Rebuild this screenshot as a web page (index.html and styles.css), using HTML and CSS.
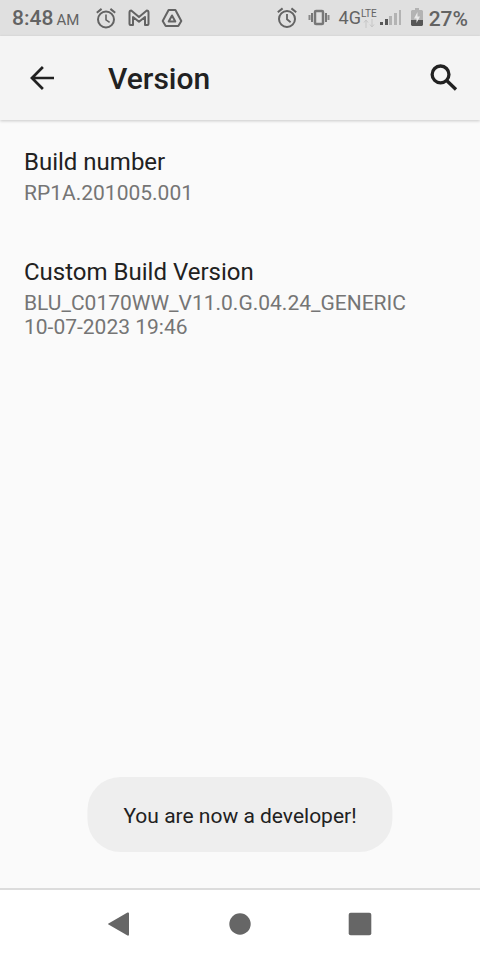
FILE: index.html
```html
<!DOCTYPE html>
<html lang="en">
<head>
<meta charset="utf-8">
<meta name="viewport" content="width=device-width, initial-scale=1">
<title>Version</title>
<link rel="stylesheet" href="styles.css">
</head>
<body>
<div class="status-bar">
  <div class="status-left">
    <div class="clock">8:48 <span class="meridiem">AM</span></div>
    <svg width="24" height="24" viewBox="0 0 24 24" aria-hidden="true">
      <g fill="none" stroke="currentColor" stroke-width="2">
        <circle cx="12" cy="13.5" r="8"/>
        <path d="M2.8 6.8 7.6 2.9M21.2 6.8 16.4 2.9"/>
        <path d="M12 8.5v5.3l3.6 2.6" stroke-width="1.6"/>
      </g>
    </svg>
    <svg width="24" height="24" viewBox="0 0 24 24" aria-hidden="true">
      <path d="M2.500 18V6.500Q2.500 4.500 4.200 4.500L12 11 19.800 4.500Q21.500 4.500 21.500 6.500V18q0 1-1 1H18V11L12 15.700 6 11v8H3.500q-1 0-1-1Z" fill="none" stroke="currentColor" stroke-width="2" stroke-linejoin="round"/>
    </svg>
    <svg width="24" height="24" viewBox="0 0 24 24" aria-hidden="true">
      <g fill="none" stroke="currentColor" stroke-width="2" stroke-linejoin="round">
        <path d="M8.600 4h6.800L21.300 15 18.300 20h-12.600L2.700 15Z"/>
        <path d="m12 9.500 3.300 6H8.700Z"/>
      </g>
    </svg>
  </div>
  <div class="status-right">
    <svg width="24" height="24" viewBox="0 0 24 24" aria-hidden="true">
      <g fill="none" stroke="currentColor" stroke-width="2">
        <circle cx="12" cy="13" r="8"/>
        <path d="M2.800 6.300 7.600 2.400M21.200 6.300 16.400 2.400"/>
        <path d="M12 8v5.300l3.600 3" stroke-width="1.800"/>
      </g>
    </svg>
    <svg width="22" height="24" viewBox="0 0 22 24" aria-hidden="true">
      <rect x="7" y="5" width="8" height="13" rx="1" fill="none" stroke="#777" stroke-width="2.500"/>
      <path d="M4 7v9M18 7v9" stroke="#777" stroke-width="2"/>
      <path d="M1.500 9v5M20.500 9v5" stroke="#888" stroke-width="2"/>
    </svg>
    <div class="network">
      <span>4G</span>
      <span class="network-detail">
        <span class="lte">LTE</span>
        <svg width="12" height="9" viewBox="0 0 12 9" aria-hidden="true">
          <path d="M3 9V1M1 3.500 3 1l2 2.500M9 0v8M7 5.500 9 8l2-2.500" fill="none" stroke="#c6c6c6"/>
        </svg>
      </span>
    </div>
    <svg class="signal" width="22" height="24" viewBox="0 0 22 24" aria-hidden="true">
      <path d="M0 16h3v3H0zM5 13h3v6H5z" fill="#565656"/>
      <path d="M9 10h3v9H9zM14 7h3v12h-3zM19 4h2v15h-2z" fill="#b3b3b3"/>
    </svg>
    <svg width="12" height="24" viewBox="0 0 12 24" aria-hidden="true">
      <path d="M4 2h4v2h3l1 1v9H0V5l1-1h3z" fill="#b3b3b3"/>
      <path d="M0 14h12v5l-1 1H1l-1-1z" fill="#565656"/>
      <path d="M6.500 6 3 12.500h2.500V17L9 10.500H6.500Z" fill="#e8e8e8"/>
    </svg>
    <div class="percent">27%</div>
  </div>
</div>
<header class="app-bar">
  <button class="icon-button" type="button" aria-label="Back">
    <svg width="36" height="36" viewBox="0 0 24 24" aria-hidden="true">
      <path d="M20 12H5M12.600 4.700 5.300 12l7.300 7.300" fill="none" stroke="currentColor" stroke-width="1.800"/>
    </svg>
  </button>
  <h1 class="title">Version</h1>
  <button class="icon-button" type="button" aria-label="Search">
    <svg width="36" height="36" viewBox="0 0 24 24" aria-hidden="true">
      <g fill="none" stroke="currentColor">
        <circle cx="9.700" cy="9.600" r="5.600" stroke-width="2.200"/>
        <path d="m13.600 13.500 6.400 6.200" stroke-width="2.200"/>
      </g>
    </svg>
  </button>
</header>
<main class="content">
  <section class="preference">
    <h2 class="preference-title">Build number</h2>
    <p class="preference-summary">RP1A.201005.001</p>
  </section>
  <section class="preference">
    <h2 class="preference-title">Custom Build Version</h2>
    <p class="preference-summary">BLU_C0170WW_V11.0.G.04.24_GENERIC<br>10-07-2023 19:46</p>
  </section>
  <div class="toast" role="status">You are now a developer!</div>
</main>
<nav class="nav-bar" aria-label="System navigation">
  <button class="nav-button" type="button" aria-label="Back">
    <svg width="24" height="24" viewBox="0 0 24 24" aria-hidden="true"><path d="M.500 11.500 19.500.500Q21 0 21 1.500v21q0 1.500-1.500 1L.500 12.500Q-.500 12 .500 11.500Z" fill="currentColor"/></svg>
  </button>
  <button class="nav-button" type="button" aria-label="Home">
    <svg width="24" height="24" viewBox="0 0 24 24" aria-hidden="true"><circle cx="12" cy="12" r="10.700" fill="currentColor"/></svg>
  </button>
  <button class="nav-button" type="button" aria-label="Recent apps">
    <svg width="24" height="24" viewBox="0 0 24 24" aria-hidden="true"><rect x=".700" y=".700" width="22.600" height="22.600" rx="2" fill="currentColor"/></svg>
  </button>
</nav>
</body>
</html>
```
FILE: styles.css
```css
* {
  box-sizing: border-box;
}

body {
  display: flex;
  flex-direction: column;
  min-height: 100vh;
  margin: 0;
  background: #fafafa;
  color: #212121;
  font-family: Roboto, "Liberation Sans", sans-serif;
}

h1,
h2,
p {
  margin: 0;
}

svg {
  display: block;
  flex: none;
}

button {
  display: flex;
  align-items: center;
  justify-content: center;
  padding: 0;
  border: 0;
  background: none;
  color: inherit;
}

.status-bar {
  display: flex;
  align-items: center;
  justify-content: space-between;
  height: 36px;
  padding: 0 12px;
  background: #e0e0e0;
  color: #636363;
  font-size: 21px;
  font-weight: 500;
  line-height: 36px;
  white-space: nowrap;
}

.status-left,
.status-right,
.network {
  display: flex;
  align-items: center;
}

.status-left {
  gap: 9px;
}

.clock {
  margin-right: 6px;
  padding-top: 2px;
}

.meridiem {
  margin-left: -2px;
  font-size: 15px;
  font-weight: 400;
}

.status-right {
  gap: 9px;
}

.network {
  font-size: 18px;
  font-weight: 400;
}

.network-detail {
  display: flex;
  flex-direction: column;
  align-items: center;
  font-size: 10px;
  line-height: 10px;
}

.signal {
  margin-left: -6px;
}

.percent {
  margin-left: -3px;
  padding-top: 2px;
}

.app-bar {
  position: relative;
  display: flex;
  align-items: center;
  height: 84px;
  padding: 0 6px 0 12px;
  background: #f4f4f4;
  box-shadow: 0 1px 3px rgba(0, 0, 0, 0.2);
}

.icon-button {
  width: 60px;
  height: 60px;
}

.title {
  flex: 1;
  margin-left: 36px;
  padding-top: 2px;
  font-size: 30px;
  font-weight: 500;
  line-height: 36px;
}

.content {
  position: relative;
  flex: 1;
}

.preference {
  padding: 27px 24px 25px;
}

.preference-title {
  font-size: 24px;
  font-weight: 400;
  line-height: 30px;
}

.preference-summary {
  padding-top: 4px;
  color: #757575;
  font-size: 21px;
  line-height: 24px;
}

.toast {
  position: absolute;
  bottom: 36px;
  left: 50%;
  padding: 26px 36px 22px;
  border-radius: 33px;
  background: #eee;
  font-size: 21px;
  line-height: 27px;
  white-space: nowrap;
  transform: translateX(-50%);
}

.nav-bar {
  display: flex;
  justify-content: center;
  height: 72px;
  padding-bottom: 2px;
  border-top: 2px solid #dcdcdc;
  background: #fff;
  color: #666;
}

.nav-button {
  width: 120px;
}
```
